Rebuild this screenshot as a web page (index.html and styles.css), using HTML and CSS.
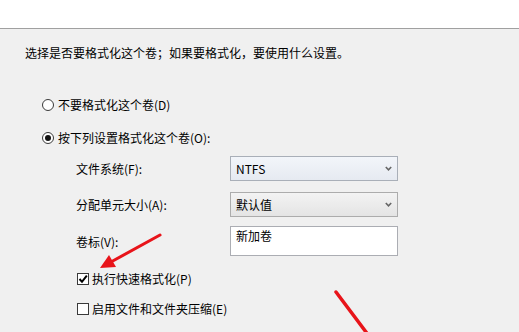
FILE: index.html
```html
<!DOCTYPE html>
<html lang="zh-CN">
<head>
<meta charset="utf-8">
<link rel="stylesheet" href="styles.css">
</head>
<body>
<div class="page">
  <div class="header"></div>
  <div class="main">
    <p class="intro">选择是否要格式化这个卷；如果要格式化，要使用什么设置。</p>
    <div class="options">
      <div class="radio-row"><span class="radio"></span><span>不要格式化这个卷(D)</span></div>
      <div class="radio-row"><span class="radio checked"></span><span>按下列设置格式化这个卷(O):</span></div>
    </div>
    <div class="form">
      <div class="form-row row1">
        <span class="label">文件系统(F):</span>
        <div class="select select-hover"><span>NTFS</span>
          <svg class="chev" width="7" height="5" viewBox="0 0 7 5"><path d="M0.8 1 L3.5 3.8 L6.2 1" fill="none" stroke="#666" stroke-width="1.6"/></svg>
        </div>
      </div>
      <div class="form-row row2">
        <span class="label">分配单元大小(A):</span>
        <div class="select"><span>默认值</span>
          <svg class="chev" width="7" height="5" viewBox="0 0 7 5"><path d="M0.8 1 L3.5 3.8 L6.2 1" fill="none" stroke="#666" stroke-width="1.6"/></svg>
        </div>
      </div>
      <div class="form-row row3">
        <span class="label">卷标(V):</span>
        <div class="textbox">新加卷</div>
      </div>
    </div>
    <div class="checks">
      <div class="check-row"><span class="checkbox">
        <svg width="10" height="10" viewBox="0 0 10 10"><path d="M1.5 5 L4 7.8 L8.8 1.6" fill="none" stroke="#000" stroke-width="2"/></svg>
      </span><span>执行快速格式化(P)</span></div>
      <div class="check-row row-b"><span class="checkbox"></span><span>启用文件和文件夹压缩(E)</span></div>
    </div>
  </div>
  <svg class="arrows" width="519" height="332" viewBox="0 0 519 332">
    <line x1="160" y1="235" x2="110" y2="262.5" stroke="#e8141a" stroke-width="3" stroke-linecap="round"/>
    <polygon points="100,268 109,255 116,267" fill="#e8141a"/>
    <line x1="336" y1="292" x2="372" y2="340" stroke="#e8141a" stroke-width="3.5" stroke-linecap="round"/>
  </svg>
</div>
</body>
</html>
```

FILE: styles.css
```css
html, body {
  margin: 0;
  padding: 0;
}
body {
  width: 519px;
  height: 332px;
  overflow: hidden;
  background: #f0f0f0;
  font-family: "Noto Sans CJK SC", "Microsoft YaHei", sans-serif;
  font-size: 12px;
  color: #000;
}
.page {
  position: relative;
  width: 519px;
  height: 332px;
  overflow: hidden;
}
.header {
  height: 28px;
  background: #fff;
  border-bottom: 1px solid #a0a0a0;
}
.main {
  padding: 14px 0 0 25px;
}
.intro {
  margin: 0;
  height: 20px;
  line-height: 20px;
}
.options {
  margin-top: 32px;
  padding-left: 17px;
  display: flex;
  flex-direction: column;
  gap: 13px;
}
.radio-row, .check-row {
  display: flex;
  align-items: center;
  height: 20px;
  line-height: 20px;
}
.radio {
  box-sizing: border-box;
  width: 12px;
  height: 12px;
  border: 1px solid #3a3a3a;
  border-radius: 50%;
  background: #fff;
  margin-right: 4px;
  display: flex;
  align-items: center;
  justify-content: center;
}
.radio.checked::after {
  content: "";
  width: 6px;
  height: 6px;
  border-radius: 50%;
  background: #111;
}
.form {
  margin-top: 8px;
  margin-left: 51px;
}
.form-row {
  display: grid;
  grid-template-columns: 154px 168px;
  align-items: center;
}
.row1, .row2 { height: 25px; }
.row2 { margin-top: 11px; }
.row3 { height: 30px; margin-top: 9px; }
.select {
  box-sizing: border-box;
  height: 25px;
  border: 1px solid #acacac;
  background: linear-gradient(#f3f3f3, #e4e4e4);
  display: flex;
  align-items: center;
  justify-content: space-between;
  padding: 0 5px 0 5px;
}
.select-hover {
  background: linear-gradient(#f2f5fa, #e6eaf1);
  border-color: #a9afb8;
}
.chev { display: block; }
.textbox {
  box-sizing: border-box;
  height: 30px;
  border: 1px solid #abadb3;
  background: #fff;
  padding: 1px 5px;
  line-height: 16px;
}
.checks {
  margin-top: 13px;
  padding-left: 52px;
}
.row-b { margin-top: 10px; }
.checkbox {
  box-sizing: border-box;
  width: 12px;
  height: 12px;
  border: 1px solid #3a3a3a;
  background: #fff;
  margin-right: 3px;
  display: flex;
  align-items: center;
  justify-content: center;
}
.checkbox svg { display: block; }
.arrows {
  position: absolute;
  left: 0;
  top: 0;
  pointer-events: none;
}
```
